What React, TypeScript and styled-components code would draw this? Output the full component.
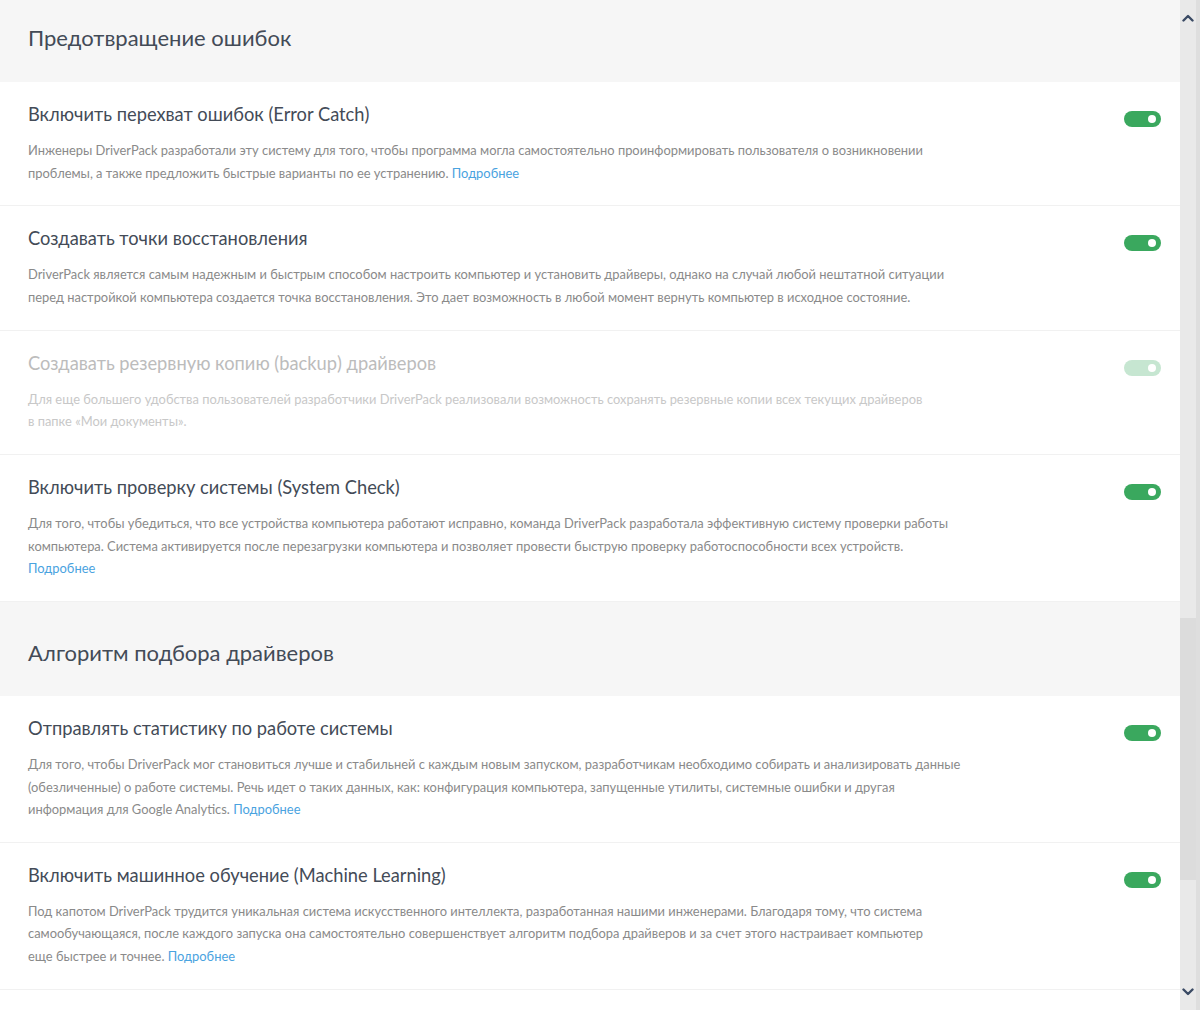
import React from 'react';
import styled, { createGlobalStyle } from 'styled-components';

const GlobalStyle = createGlobalStyle`
  html, body {
    margin: 0;
    padding: 0;
    background: #ffffff;
  }
  body {
    font-family: Lato, "Open Sans", "Liberation Sans", sans-serif;
    -webkit-font-smoothing: antialiased;
  }
`;

const GREEN = '#3aa85e';

const Viewport = styled.div`
  display: flex;
  width: 1200px;
  height: 1010px;
  overflow: hidden;
`;

const Content = styled.div`
  flex: 1;
  min-width: 0;
  display: flex;
  flex-direction: column;
`;

const SectionHeader = styled.div<{ $first?: boolean }>`
  background: #f6f6f6;
  padding: ${({ $first }) => ($first ? '26px 28px 32px' : '39px 28px 31px')};
  font-size: 22px;
  line-height: 24px;
  color: #434b57;
`;

const Row = styled.div`
  display: flex;
  align-items: flex-start;
  padding: 21px 19px 21.4px 28px;
  border-bottom: 1px solid #f1f1f1;
`;

const RowBody = styled.div`
  flex: 1;
  min-width: 0;
`;

const RowTitle = styled.div<{ $disabled?: boolean }>`
  font-size: 18.3px;
  line-height: 22px;
  color: ${({ $disabled }) => ($disabled ? '#bcbcbc' : '#434b57')};
`;

const RowText = styled.p<{ $disabled?: boolean }>`
  margin: 14px 0 0;
  font-size: 12.9px;
  line-height: 22.5px;
  color: ${({ $disabled }) => ($disabled ? '#c8c8c8' : '#8a8a8a')};
`;

const More = styled.a`
  color: #4aa3df;
  text-decoration: none;
`;

const Toggle = styled.div<{ $disabled?: boolean }>`
  flex-shrink: 0;
  position: relative;
  width: 37px;
  height: 16px;
  margin-top: 8px;
  border-radius: 8px;
  background: ${({ $disabled }) => ($disabled ? '#c6e6d1' : GREEN)};

  &::after {
    content: '';
    position: absolute;
    top: 4px;
    right: 5px;
    width: 8px;
    height: 8px;
    border-radius: 50%;
    background: #ffffff;
  }
`;

const ScrollTrack = styled.div`
  width: 16px;
  border-right: 4px solid #dedede;
  background: #e9e9e9;
  display: flex;
  flex-direction: column;
  align-items: center;
`;

const ScrollArrow = styled.div`
  height: 36px;
  display: flex;
  align-items: center;
  justify-content: center;
`;

const ScrollSpace = styled.div<{ $size: number }>`
  height: ${({ $size }) => $size}px;
`;

const ScrollThumb = styled.div`
  width: 16px;
  height: 262px;
  background: #dcdcdc;
`;

type Setting = {
  title: string;
  lines: string[];
  more?: boolean;
  moreOwnLine?: boolean;
  disabled?: boolean;
};

const preventionSettings: Setting[] = [
  {
    title: 'Включить перехват ошибок (Error Catch)',
    lines: [
      'Инженеры DriverPack разработали эту систему для того, чтобы программа могла самостоятельно проинформировать пользователя о возникновении',
      'проблемы, а также предложить быстрые варианты по ее устранению.',
    ],
    more: true,
  },
  {
    title: 'Создавать точки восстановления',
    lines: [
      'DriverPack является самым надежным и быстрым способом настроить компьютер и установить драйверы, однако на случай любой нештатной ситуации',
      'перед настройкой компьютера создается точка восстановления. Это дает возможность в любой момент вернуть компьютер в исходное состояние.',
    ],
  },
  {
    title: 'Создавать резервную копию (backup) драйверов',
    lines: [
      'Для еще большего удобства пользователей разработчики DriverPack реализовали возможность сохранять резервные копии всех текущих драйверов',
      'в папке «Мои документы».',
    ],
    disabled: true,
  },
  {
    title: 'Включить проверку системы (System Check)',
    lines: [
      'Для того, чтобы убедиться, что все устройства компьютера работают исправно, команда DriverPack разработала эффективную систему проверки работы',
      'компьютера. Система активируется после перезагрузки компьютера и позволяет провести быструю проверку работоспособности всех устройств.',
    ],
    more: true,
    moreOwnLine: true,
  },
];

const algorithmSettings: Setting[] = [
  {
    title: 'Отправлять статистику по работе системы',
    lines: [
      'Для того, чтобы DriverPack мог становиться лучше и стабильней с каждым новым запуском, разработчикам необходимо собирать и анализировать данные',
      '(обезличенные) о работе системы. Речь идет о таких данных, как: конфигурация компьютера, запущенные утилиты, системные ошибки и другая',
      'информация для Google Analytics.',
    ],
    more: true,
  },
  {
    title: 'Включить машинное обучение (Machine Learning)',
    lines: [
      'Под капотом DriverPack трудится уникальная система искусственного интеллекта, разработанная нашими инженерами. Благодаря тому, что система',
      'самообучающаяся, после каждого запуска она самостоятельно совершенствует алгоритм подбора драйверов и за счет этого настраивает компьютер',
      'еще быстрее и точнее.',
    ],
    more: true,
  },
];

const SettingRow: React.FC<{ item: Setting }> = ({ item }) => (
  <Row>
    <RowBody>
      <RowTitle $disabled={item.disabled}>{item.title}</RowTitle>
      <RowText $disabled={item.disabled}>
        {item.lines.map((line, i) => (
          <React.Fragment key={i}>
            {i > 0 && <br />}
            {line}
          </React.Fragment>
        ))}
        {item.more && (
          <>
            {item.moreOwnLine ? <br /> : ' '}
            <More href="#">Подробнее</More>
          </>
        )}
      </RowText>
    </RowBody>
    <Toggle $disabled={item.disabled} />
  </Row>
);

const Chevron: React.FC<{ down?: boolean }> = ({ down }) => (
  <svg width="12" height="8" viewBox="0 0 12 8">
    <path
      d={down ? 'M1.5 1.5 L6 6 L10.5 1.5' : 'M1.5 6.5 L6 2 L10.5 6.5'}
      fill="none"
      stroke="#3a4a64"
      strokeWidth="2.4"
      strokeLinecap="round"
      strokeLinejoin="round"
    />
  </svg>
);

export default function App() {
  return (
    <>
      <GlobalStyle />
      <Viewport>
        <Content>
          <SectionHeader $first>Предотвращение ошибок</SectionHeader>
          {preventionSettings.map((item) => (
            <SettingRow key={item.title} item={item} />
          ))}
          <SectionHeader>Алгоритм подбора драйверов</SectionHeader>
          {algorithmSettings.map((item) => (
            <SettingRow key={item.title} item={item} />
          ))}
        </Content>
        <ScrollTrack>
          <ScrollArrow>
            <Chevron />
          </ScrollArrow>
          <ScrollSpace $size={582} />
          <ScrollThumb />
          <ScrollSpace $size={94} />
          <ScrollArrow>
            <Chevron down />
          </ScrollArrow>
        </ScrollTrack>
      </Viewport>
    </>
  );
}
